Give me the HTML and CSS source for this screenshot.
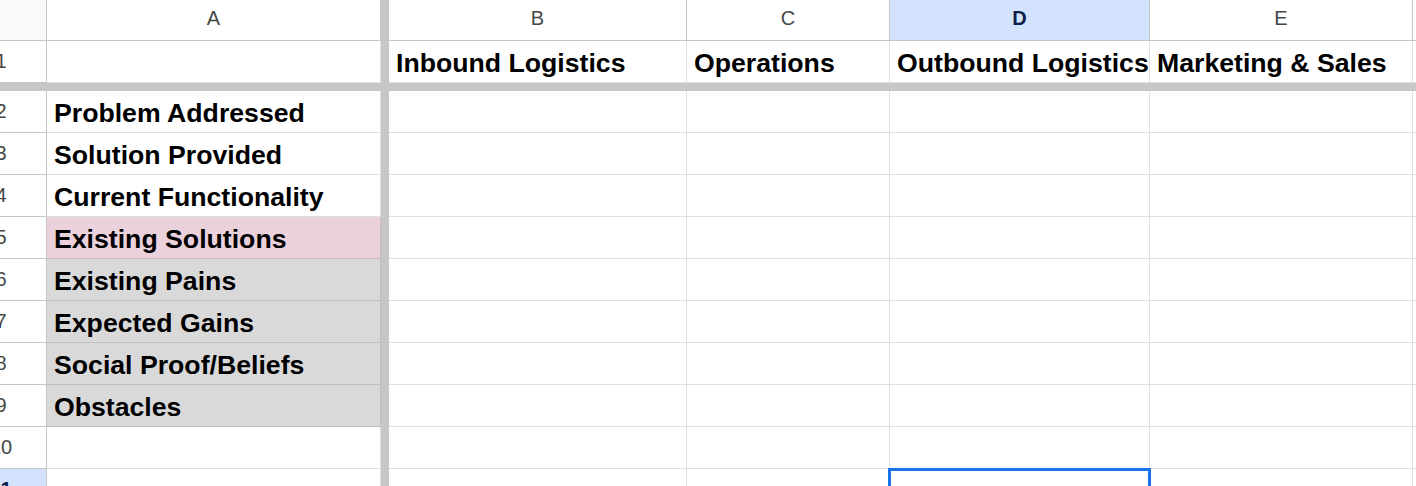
FILE: index.html
```html
<!DOCTYPE html>
<html lang="en">
<head>
    <meta charset="UTF-8">
    <title>Value Chain Sheet</title>
    <meta name="viewport" content="width=device-width, initial-scale=1">
    <link rel="stylesheet" href="styles.css">
</head>
<body>
    <div class="viewport">
        <div class="sheet">
            <!-- column headers -->
            <div class="corner"></div>
            <div class="colhdr">A</div>
            <div class="vbar"></div>
            <div class="colhdr">B</div>
            <div class="colhdr">C</div>
            <div class="colhdr active">D</div>
            <div class="colhdr">E</div>
            <div class="colhdr"></div>

            <!-- row 1 (frozen) -->
            <div class="rowhdr">1</div>
            <div class="cell"></div>
            <div class="vbar"></div>
            <div class="cell">Inbound Logistics</div>
            <div class="cell">Operations</div>
            <div class="cell">Outbound Logistics</div>
            <div class="cell">Marketing &amp; Sales</div>
            <div class="cell"></div>

            <div class="hbar"></div>

            <div class="rowhdr">2</div>
            <div class="cell">Problem Addressed</div>
            <div class="vbar"></div>
            <div class="cell"></div><div class="cell"></div><div class="cell"></div><div class="cell"></div><div class="cell"></div>

            <div class="rowhdr">3</div>
            <div class="cell">Solution Provided</div>
            <div class="vbar"></div>
            <div class="cell"></div><div class="cell"></div><div class="cell"></div><div class="cell"></div><div class="cell"></div>

            <div class="rowhdr">4</div>
            <div class="cell">Current Functionality</div>
            <div class="vbar"></div>
            <div class="cell"></div><div class="cell"></div><div class="cell"></div><div class="cell"></div><div class="cell"></div>

            <div class="rowhdr">5</div>
            <div class="cell pink">Existing Solutions</div>
            <div class="vbar"></div>
            <div class="cell"></div><div class="cell"></div><div class="cell"></div><div class="cell"></div><div class="cell"></div>

            <div class="rowhdr">6</div>
            <div class="cell grey">Existing Pains</div>
            <div class="vbar"></div>
            <div class="cell"></div><div class="cell"></div><div class="cell"></div><div class="cell"></div><div class="cell"></div>

            <div class="rowhdr">7</div>
            <div class="cell grey">Expected Gains</div>
            <div class="vbar"></div>
            <div class="cell"></div><div class="cell"></div><div class="cell"></div><div class="cell"></div><div class="cell"></div>

            <div class="rowhdr">8</div>
            <div class="cell grey">Social Proof/Beliefs</div>
            <div class="vbar"></div>
            <div class="cell"></div><div class="cell"></div><div class="cell"></div><div class="cell"></div><div class="cell"></div>

            <div class="rowhdr">9</div>
            <div class="cell grey">Obstacles</div>
            <div class="vbar"></div>
            <div class="cell"></div><div class="cell"></div><div class="cell"></div><div class="cell"></div><div class="cell"></div>

            <div class="rowhdr">10</div>
            <div class="cell"></div>
            <div class="vbar"></div>
            <div class="cell"></div><div class="cell"></div><div class="cell"></div><div class="cell"></div><div class="cell"></div>

            <div class="rowhdr active">11</div>
            <div class="cell"></div>
            <div class="vbar"></div>
            <div class="cell"></div><div class="cell"></div><div class="cell selected"></div><div class="cell"></div><div class="cell"></div>
        </div>
    </div>
</body>
</html>
```

FILE: styles.css
```css
html, body {
    margin: 0;
    padding: 0;
    background: #ffffff;
}
body {
    font-family: "Liberation Sans", Arial, sans-serif;
}
.viewport {
    width: 1416px;
    height: 486px;
    overflow: hidden;
}
.sheet {
    display: grid;
    grid-template-columns: 91px 334px 8px 298px 203px 260px 263px 200px;
    grid-template-rows: 41px 42px 8px repeat(10, 42px);
    margin-left: -44px;
    width: max-content;
    background: #c7c7c7;
}
.sheet > div {
    box-sizing: border-box;
}
.corner {
    background: #f8f9fa;
    border-right: 1px solid #c4c7c5;
    border-bottom: 1px solid #c4c7c5;
}
.colhdr {
    background: #ffffff;
    border-right: 1px solid #c4c7c5;
    border-bottom: 1px solid #c4c7c5;
    color: #444746;
    font-size: 20px;
    display: flex;
    align-items: center;
    justify-content: center;
    padding-bottom: 4px;
}
.rowhdr {
    background: #ffffff;
    border-right: 1px solid #c4c7c5;
    border-bottom: 1px solid #c4c7c5;
    color: #444746;
    font-size: 20px;
    display: flex;
    align-items: center;
    justify-content: center;
}
.colhdr.active,
.rowhdr.active {
    background: #d3e3fd;
    color: #0b1f4a;
    font-weight: bold;
}
.vbar {
    background: #c7c7c7;
}
.hbar {
    grid-column: 1 / -1;
    background: #c7c7c7;
}
.cell {
    background: #ffffff;
    border-right: 1px solid rgba(0, 0, 0, 0.12);
    border-bottom: 1px solid rgba(0, 0, 0, 0.12);
    font-size: 26.67px;
    font-weight: bold;
    line-height: 30px;
    color: #000000;
    white-space: nowrap;
    display: flex;
    align-items: flex-end;
    padding: 0 6px 4px 7px;
    overflow: visible;
}
.cell.pink {
    background: #ead1dc;
}
.cell.grey {
    background: #d9d9d9;
}
.cell.selected {
    position: relative;
}
.cell.selected::after {
    content: "";
    position: absolute;
    top: -1px;
    left: -2px;
    right: -2px;
    bottom: -2px;
    border: 3px solid #1a73e8;
}
```
